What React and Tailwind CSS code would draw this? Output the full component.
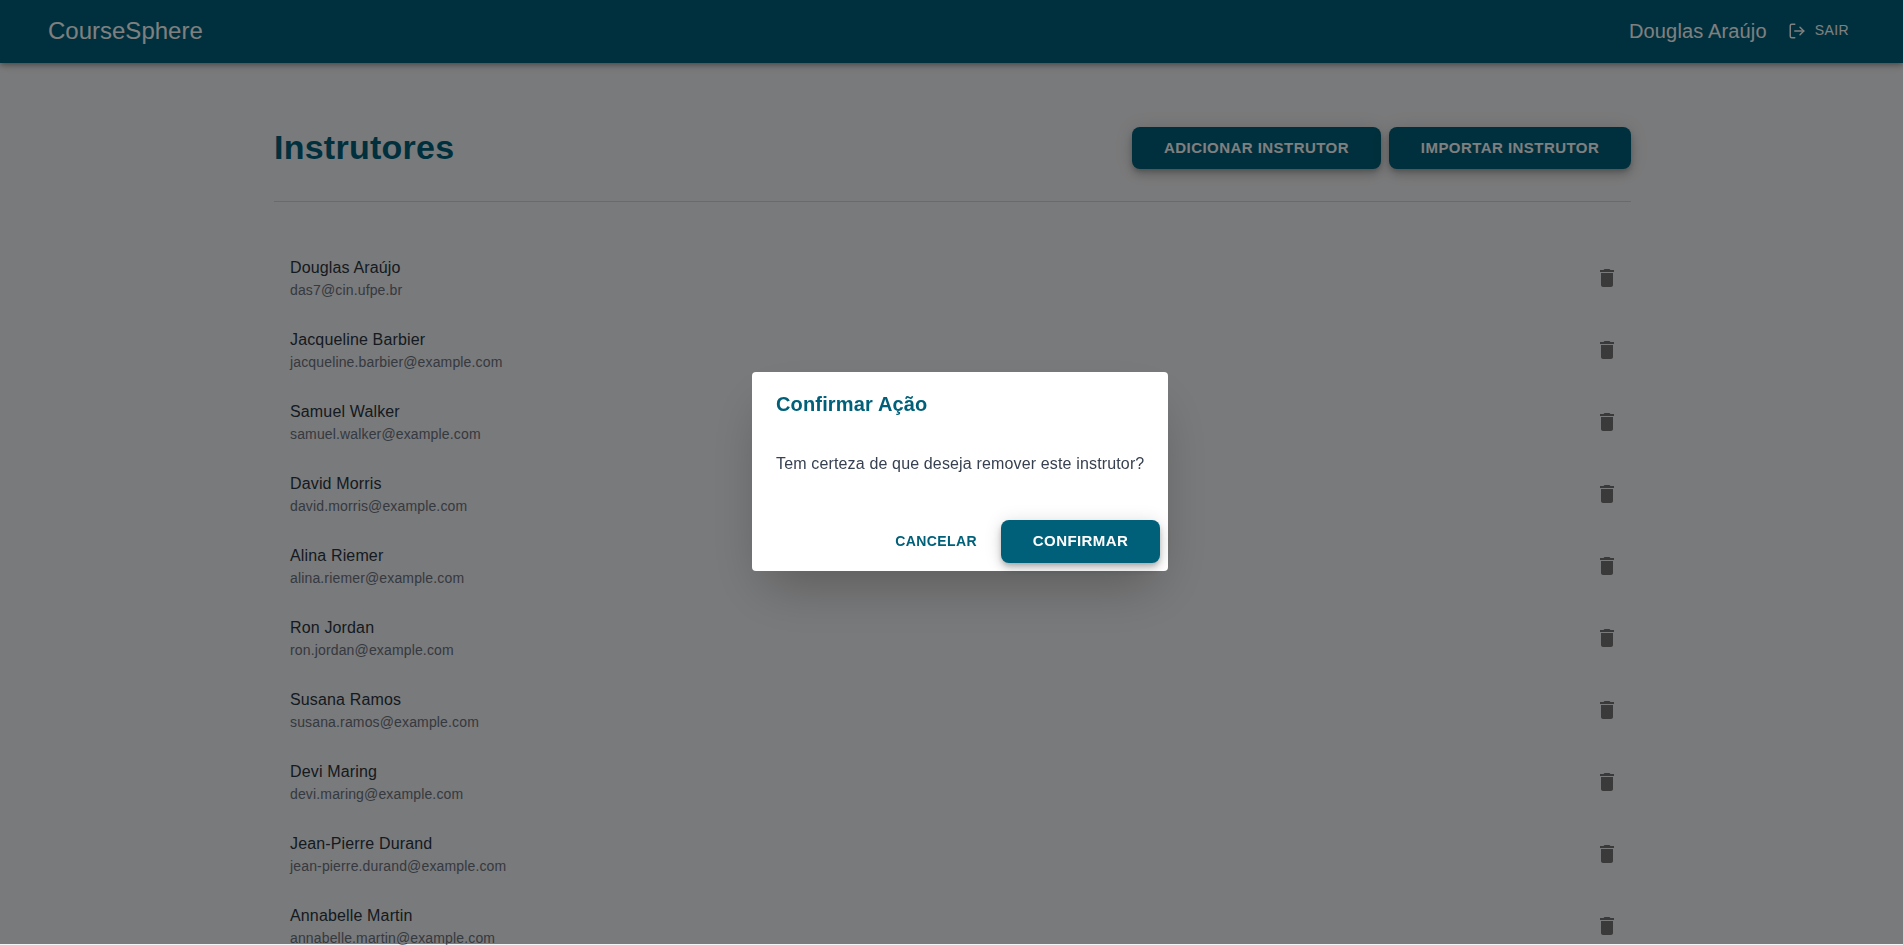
import { LogOut } from 'lucide-react';

const instructors = [
    { name: "Douglas Araújo", email: "das7@cin.ufpe.br" },
    { name: "Jacqueline Barbier", email: "jacqueline.barbier@example.com" },
    { name: "Samuel Walker", email: "samuel.walker@example.com" },
    { name: "David Morris", email: "david.morris@example.com" },
    { name: "Alina Riemer", email: "alina.riemer@example.com" },
    { name: "Ron Jordan", email: "ron.jordan@example.com" },
    { name: "Susana Ramos", email: "susana.ramos@example.com" },
    { name: "Devi Maring", email: "devi.maring@example.com" },
    { name: "Jean-Pierre Durand", email: "jean-pierre.durand@example.com" },
    { name: "Annabelle Martin", email: "annabelle.martin@example.com" },
];

const TrashIcon = () => (
    <svg viewBox="0 0 24 24" className="w-6 h-6 fill-[#757575]">
        <path d="M6 19c0 1.1.9 2 2 2h8c1.1 0 2-.9 2-2V7H6v12zM19 4h-3.5l-1-1h-5l-1 1H5v2h14V4z" />
    </svg>
);

const App = () => {
    return (
        <div className="h-[945px] overflow-hidden bg-[#f3f4f6] font-['Liberation_Sans',Arial,sans-serif]">
            {/* Header */}
            <header className="h-[63px] bg-[#00607a] text-white flex items-center justify-between pl-[48px] pr-[54px] pb-[2px] shadow-[0_2px_4px_-1px_rgba(0,0,0,0.2),0_4px_5px_0_rgba(0,0,0,0.14),0_1px_10px_0_rgba(0,0,0,0.12)] relative">
                <span className="text-[24px] leading-8">CourseSphere</span>
                <div className="flex items-center gap-[21px]">
                    <span className="text-[20px] tracking-[0.15px]">Douglas Araújo</span>
                    <button className="flex items-center gap-[9px] text-[14px] tracking-[0.4px]">
                        <LogOut className="w-[18px] h-[18px]" />
                        SAIR
                    </button>
                </div>
            </header>

            {/* Content */}
            <main className="w-[1357px] ml-[274px] pt-[64px]">
                <div className="flex items-center justify-between pb-[32px] border-b border-[#d1d5db]">
                    <h1 className="text-[34px] leading-[40px] font-bold tracking-[0.25px] text-[#00607a] pb-[2px]">Instrutores</h1>
                    <div className="flex gap-2">
                        <button className="h-[42px] w-[249px] rounded-lg bg-[#00607a] text-white text-[15px] font-bold tracking-[0.45px] shadow-[0_3px_5px_-1px_rgba(0,0,0,0.2),0_6px_10px_0_rgba(0,0,0,0.14),0_1px_18px_0_rgba(0,0,0,0.12)]">ADICIONAR INSTRUTOR</button>
                        <button className="h-[42px] w-[242px] rounded-lg bg-[#00607a] text-white text-[15px] font-bold tracking-[0.45px] shadow-[0_3px_5px_-1px_rgba(0,0,0,0.2),0_6px_10px_0_rgba(0,0,0,0.14),0_1px_18px_0_rgba(0,0,0,0.12)]">IMPORTAR INSTRUTOR</button>
                    </div>
                </div>
                <ul className="pt-[40px]">
                    {instructors.map((instructor) => (
                        <li key={instructor.email} className="h-[72px] flex items-center justify-between pl-4 pr-[12px]">
                            <div className="tracking-[0.15px]">
                                <p className="text-[16px] leading-6 text-[#2b3542]">{instructor.name}</p>
                                <p className="text-[14px] leading-5 text-[#6b7280]">{instructor.email}</p>
                            </div>
                            <TrashIcon />
                        </li>
                    ))}
                </ul>
            </main>

            {/* Confirm dialog */}
            <div className="fixed inset-x-0 top-0 bottom-[1px] bg-black/50 flex items-center justify-center pl-[17px] pb-[1px]">
                <div className="w-[416px] h-[199px] bg-white rounded shadow-2xl flex flex-col">
                    <h2 className="px-6 pt-4 text-[20px] leading-8 font-bold tracking-[0.15px] text-[#00607a]">Confirmar Ação</h2>
                    <p className="pl-6 pt-[32px] text-[16px] leading-6 tracking-[0.15px] whitespace-nowrap text-[#374151]">Tem certeza de que deseja remover este instrutor?</p>
                    <div className="mt-auto flex items-center justify-end gap-[16px] p-2">
                        <button className="px-2 text-[14px] font-bold tracking-[0.4px] text-[#00607a]">CANCELAR</button>
                        <button className="h-[43px] w-[159px] rounded-lg bg-[#00607a] text-white text-[15px] font-bold tracking-[0.4px] shadow-[0_3px_5px_-1px_rgba(0,0,0,0.2),0_6px_10px_0_rgba(0,0,0,0.14),0_1px_18px_0_rgba(0,0,0,0.12)]">CONFIRMAR</button>
                    </div>
                </div>
            </div>
        </div>
    );
};

export default App;
